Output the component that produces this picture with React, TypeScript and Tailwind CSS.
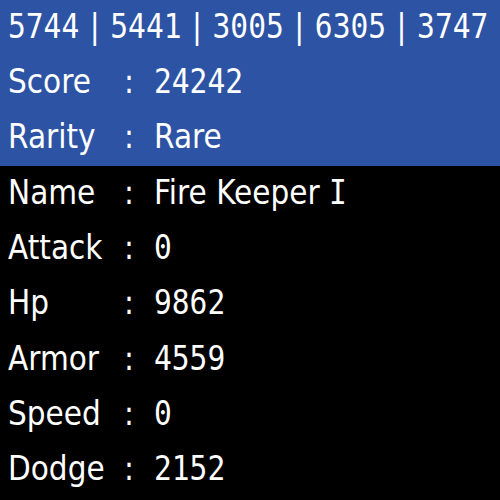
import React from "react";

const sans = "font-['DejaVu_Sans',sans-serif]";

function Mixed({ text }: { text: string }) {
  const parts = text.split(/([0-9]+|\bI\b)/).filter((p) => p.length > 0);
  return (
    <>
      {parts.map((p, i) =>
        /^[0-9]+$|^I$/.test(p) ? (
          <span key={i} className="font-['DejaVu_Sans_Mono',monospace]">
            {p}
          </span>
        ) : (
          <span key={i} className={sans}>
            {p}
          </span>
        )
      )}
    </>
  );
}

function Txt({ text, wide }: { text: string; wide?: boolean }) {
  return (
    <span
      className={
        wide
          ? "inline-block origin-left scale-x-[0.87] whitespace-pre [word-spacing:1.3px]"
          : "inline-block origin-left scale-x-[0.87] whitespace-pre"
      }
    >
      <Mixed text={text} />
    </span>
  );
}

function Row({ label, value }: { label: string; value: string }) {
  return (
    <div className="flex h-[55.33px] items-center pl-[8px] pb-[4px]">
      <div className="w-[116px] shrink-0">
        <Txt text={label} />
      </div>
      <div className="w-[30px] shrink-0">
        <Txt text=":" />
      </div>
      <div className="flex-1">
        <Txt text={value} />
      </div>
    </div>
  );
}

export default function App() {
  return (
    <div className={`w-[500px] h-[500px] overflow-hidden bg-black text-white text-[34px] leading-none ${sans}`}>
      <div className="bg-[#2c53a4] h-[166px] flex flex-col">
        <div className="flex h-[55.33px] items-center pl-[8px] pb-[4px]">
          <Txt text="5744 | 5441 | 3005 | 6305 | 3747" wide />
        </div>
        <Row label="Score" value="24242" />
        <Row label="Rarity" value="Rare" />
      </div>
      <div className="flex flex-col">
        <Row label="Name" value="Fire Keeper I" />
        <Row label="Attack" value="0" />
        <Row label="Hp" value="9862" />
        <Row label="Armor" value="4559" />
        <Row label="Speed" value="0" />
        <Row label="Dodge" value="2152" />
      </div>
    </div>
  );
}
